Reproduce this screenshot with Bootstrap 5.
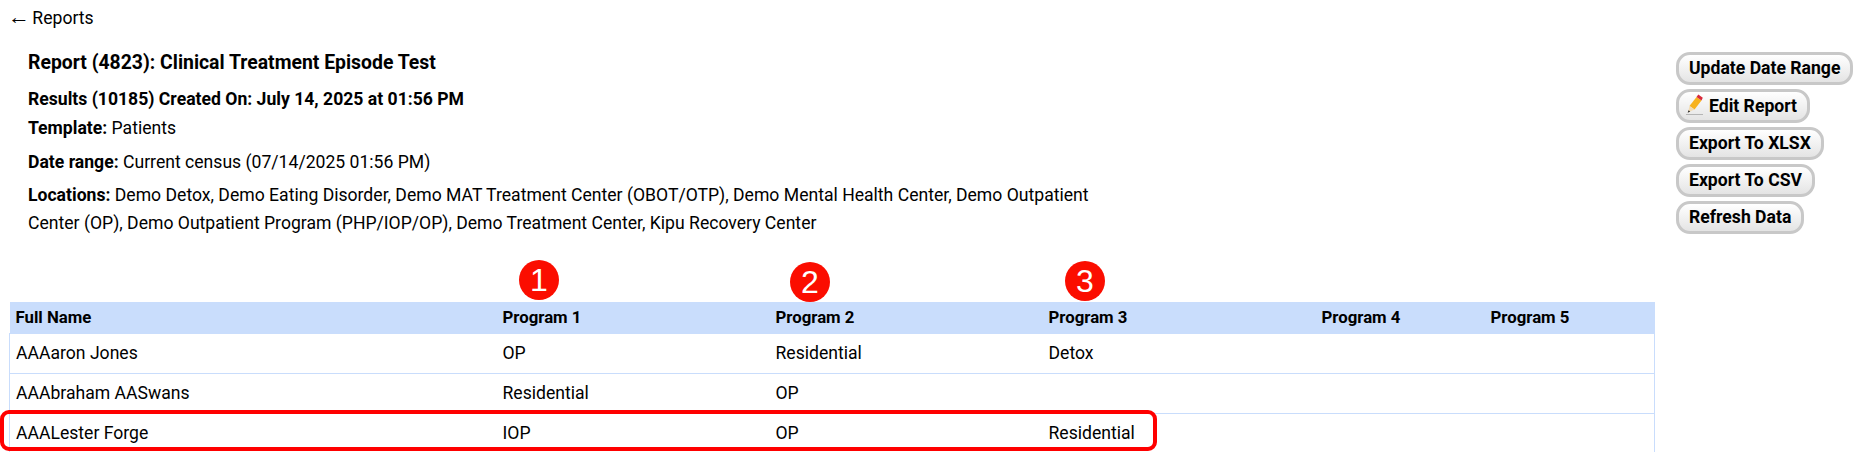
<!DOCTYPE html>
<html lang="en">
<head>
    <meta charset="UTF-8">
    <meta name="viewport" content="width=device-width, initial-scale=1.0">
    <title>Report 4823</title>
    <link href="https://cdn.jsdelivr.net/npm/bootstrap@5.3.0/dist/css/bootstrap.min.css" rel="stylesheet">
    <style>
        body {
            font-family: Roboto, "Liberation Sans", sans-serif;
            font-size: 17.6px;
            color: #000;
            overflow: hidden;
        }
        .page-wrap { position: relative; height: 452px; }
        .back-link {
            display: block;
            padding: 6px 0 0 8px;
            height: 44px;
            line-height: 24px;
            color: #000;
            text-decoration: none;
        }
        .back-arrow { font-family: "Liberation Sans", sans-serif; font-size: 22px; line-height: 1; margin-right: -2px; }
        .report-top { padding-left: 28px; height: 258px; }
        .report-info { width: 1075px; }
        .report-info p { margin: 0; line-height: 28px; }
        .report-title { font-size: 19.4px; font-weight: 700; line-height: 28px; padding-top: 5px; margin: 0 0 8px; }
        .report-info .line-results { font-weight: 700; margin-bottom: 1px; }
        .report-info .line-template { margin-bottom: 6px; }
        .report-info .line-date { margin-bottom: 5px; }
        .report-btns { width: 178px; padding-top: 8px; gap: 4px; margin-right: 1px; }
        .grey-btn {
            border: 3px solid #c8c8c8;
            border-radius: 14px;
            background: linear-gradient(#fff, #e4e4e4);
            font-weight: 700;
            font-size: 17.6px;
            color: #000;
            height: 33px;
            line-height: 25px;
            padding: 0 10px;
            align-self: flex-start;
            white-space: nowrap;
        }
        .grey-btn.has-icon { padding-left: 7px; height: 34px; }
        .grey-btn svg { vertical-align: -3px; margin-right: 6px; margin-top: -4px; }
        .results-table { width: 1645px; margin-left: 9px; table-layout: fixed; border-collapse: collapse; }
        .results-table th {
            background: #c9ddfc;
            font-size: 16.8px;
            font-weight: 700;
            height: 31px;
            padding: 0 6px;
        }
        .results-table td {
            border: 1px solid #c9ddfc;
            border-width: 1px 0;
            height: 40px;
            padding: 0 6px;
        }
        .results-table tr td:first-child { border-left-width: 1px; }
        .results-table tr td:last-child { border-right-width: 1px; }
        .num-pin {
            position: absolute;
            width: 40px;
            height: 40px;
            border-radius: 50%;
            background: #fb0d00;
            color: #fff;
            font-size: 32px;
            line-height: 40px;
            text-align: center;
            font-family: "Liberation Sans", sans-serif;
        }
        .pin-1 { left: 519px; top: 260px; }
        .pin-2 { left: 790px; top: 262px; }
        .pin-3 { left: 1065px; top: 261px; }
        .row-mark {
            position: absolute;
            left: 0;
            top: 410px;
            width: 1157px;
            height: 41px;
            border: 4px solid #f00;
            border-radius: 9px;
        }
    </style>
</head>
<body>
    <div class="page-wrap">
        <a class="back-link" href="#"><span class="back-arrow">&larr;</span> Reports</a>
        <div class="report-top d-flex justify-content-between">
            <div class="report-info">
                <h5 class="report-title">Report (4823): Clinical Treatment Episode Test</h5>
                <p class="line-results">Results (10185) Created On: July 14, 2025 at 01:56 PM</p>
                <p class="line-template"><b>Template:</b> Patients</p>
                <p class="line-date"><b>Date range:</b> Current census (07/14/2025 01:56 PM)</p>
                <p><b>Locations:</b> Demo Detox, Demo Eating Disorder, Demo MAT Treatment Center (OBOT/OTP), Demo Mental Health Center, Demo Outpatient Center (OP), Demo Outpatient Program (PHP/IOP/OP), Demo Treatment Center, Kipu Recovery Center</p>
            </div>
            <div class="report-btns d-flex flex-column">
                <button class="grey-btn" type="button">Update Date Range</button>
                <button class="grey-btn has-icon" type="button"><svg width="17" height="21" viewBox="0 0 17 21">
                        <path d="M0 20.500h17" stroke="#b5b5b5" stroke-width="1"/>
                        <path d="M3.500 12L10.500 3l5 3.500-7 9z" fill="#f7b21e"/>
                        <path d="M10.500 3l1.800-2.500 4.500 3.300-1.300 2.700z" fill="#d9293a"/>
                        <path d="M3.500 12l5 3.500-6.500 3z" fill="#f3dcb4"/>
                        <path d="M2.600 16.300l-.9 2.500 2.500-1.200z" fill="#222"/>
                    </svg>Edit Report</button>
                <button class="grey-btn" type="button">Export To XLSX</button>
                <button class="grey-btn" type="button">Export To CSV</button>
                <button class="grey-btn" type="button">Refresh Data</button>
            </div>
        </div>
        <table class="results-table">
            <colgroup>
                <col style="width: 487px">
                <col style="width: 273px">
                <col style="width: 273px">
                <col style="width: 273px">
                <col style="width: 169px">
                <col style="width: 170px">
            </colgroup>
            <thead>
                <tr>
                    <th>Full Name</th>
                    <th>Program 1</th>
                    <th>Program 2</th>
                    <th>Program 3</th>
                    <th>Program 4</th>
                    <th>Program 5</th>
                </tr>
            </thead>
            <tbody>
                <tr><td>AAAaron Jones</td><td>OP</td><td>Residential</td><td>Detox</td><td></td><td></td></tr>
                <tr><td>AAAbraham AASwans</td><td>Residential</td><td>OP</td><td></td><td></td><td></td></tr>
                <tr><td>AAALester Forge</td><td>IOP</td><td>OP</td><td>Residential</td><td></td><td></td></tr>
            </tbody>
        </table>
        <div class="num-pin pin-1">1</div>
        <div class="num-pin pin-2">2</div>
        <div class="num-pin pin-3">3</div>
        <div class="row-mark"></div>
    </div>
    <script src="https://cdn.jsdelivr.net/npm/bootstrap@5.3.0/dist/js/bootstrap.bundle.min.js"></script>
</body>
</html>
